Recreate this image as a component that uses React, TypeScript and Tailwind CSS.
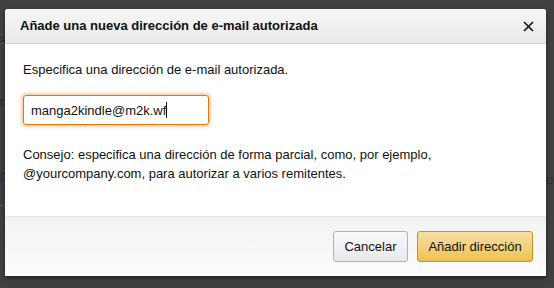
import React from 'react';

const App: React.FC = () => {
  return (
    <div
      className="relative w-[554px] h-[288px] overflow-hidden bg-[#404040] pt-[9px] pl-[5px]"
      style={{ fontFamily: '"Liberation Sans", Arial, sans-serif' }}
    >
      {/* faint page content behind the overlay */}
      <div className="absolute left-0 top-[30px] text-[13px] leading-[19px] text-[#2a2a2a]">a</div>
      <div className="absolute left-0 top-[43px] w-[6px] h-px bg-[#555]" />
      <div className="absolute left-0 top-[92px] text-[13px] text-[#2a2a2a]">n</div>
      <div className="absolute left-0 top-[166px] text-[13px] text-[#22304a]">p</div>
      <div className="absolute left-0 top-[205px] w-[6px] h-px bg-[#555]" />
      <div className="absolute left-[546px] top-[170px] text-[13px] text-[#22304a]">o</div>

      <div className="relative flex flex-col w-[541px] h-[267px] bg-white rounded-t-[3px] shadow-[0_2px_4px_rgba(0,0,0,0.5)]">
        <div className="flex items-center justify-between h-[35px] pl-[15px] pr-[12px] border-b border-[#cfcfcf] rounded-t-[3px] bg-gradient-to-b from-[#f7f7f7] to-[#e9e9e9]">
          <span className="text-[13px] font-bold text-[#111]">Añade una nueva dirección de e-mail autorizada</span>
          <svg width="11" height="11" viewBox="0 0 11 11" className="mt-[1px]">
            <path d="M1 1 L10 10 M10 1 L1 10" stroke="#111" strokeWidth="1.6" fill="none" />
          </svg>
        </div>

        <div className="flex flex-col flex-1 pl-[18px] pt-[16px] text-[13px] leading-[19px] text-[#111]">
          <p>Especifica una dirección de e-mail autorizada.</p>
          <div className="mt-[16px] flex items-center w-[186px] h-[30px] px-[7px] rounded-[3px] border border-[#e77600] shadow-[0_0_3px_2px_rgba(228,121,17,0.35)]">
            <span>manga2kindle@m2k.wf</span>
            <span className="w-px h-[16px] bg-[#111]" />
          </div>
          <p className="mt-[20px]">
            Consejo: especifica una dirección de forma parcial, como, por ejemplo,
            <br />
            @yourcompany.com, para autorizar a varios remitentes.
          </p>
        </div>

        <div className="flex justify-end items-center gap-[9px] h-[60px] pr-[13px] border-t border-[#e3e3e3] rounded-b-[3px] bg-gradient-to-b from-[#f3f3f3] to-[#fcfcfc]">
          <button className="w-[75px] h-[31px] rounded-[3px] border border-[#adb1b8] bg-gradient-to-b from-[#f7f8fa] to-[#e7e9ec] text-[13px] text-[#111]">
            Cancelar
          </button>
          <button className="w-[116px] h-[31px] rounded-[3px] border border-[#c89411] bg-gradient-to-b from-[#f7dfa5] to-[#f0c14b] text-[13px] text-[#111]">
            Añadir dirección
          </button>
        </div>
      </div>
    </div>
  );
};

export default App;
